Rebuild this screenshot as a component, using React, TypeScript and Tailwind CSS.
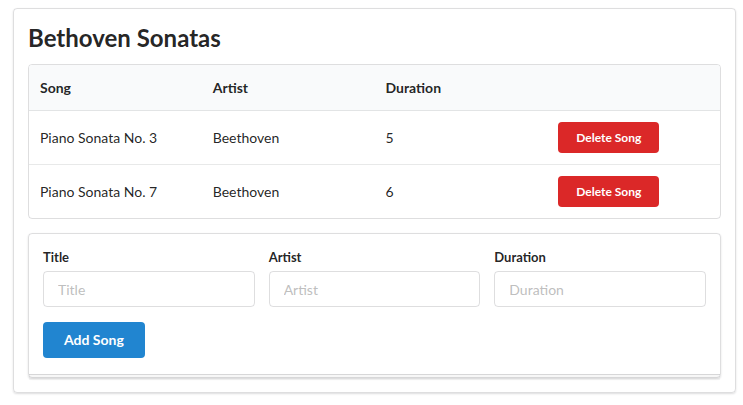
const songs = [
  { title: "Piano Sonata No. 3", artist: "Beethoven", duration: 5 },
  { title: "Piano Sonata No. 7", artist: "Beethoven", duration: 6 },
];

const fields = ["Title", "Artist", "Duration"];

export default function App() {
  return (
    <div className="min-h-screen bg-white pl-[13px] pr-[7px] pt-2 font-['Lato','Noto_Sans',sans-serif] text-[14px] text-[rgba(0,0,0,0.87)]">
      <div className="rounded-[4px] border border-[rgba(34,36,38,0.15)] p-[14px] shadow-[0_1px_2px_0_rgba(34,36,38,0.15)]">
        <h2 className="mb-[12px] text-[24px] font-bold leading-[29px]">Bethoven Sonatas</h2>

        {/* song list */}
        <div className="overflow-hidden rounded-[4px] border border-[rgba(34,36,38,0.15)]">
          <table className="w-full table-fixed border-collapse text-left">
            <thead>
              <tr className="bg-[#f9fafb]">
                <th className="px-[11px] py-[13px] font-bold leading-[19px]">Song</th>
                <th className="px-[11px] py-[13px] font-bold leading-[19px]">Artist</th>
                <th className="px-[11px] py-[13px] font-bold leading-[19px]">Duration</th>
                <th className="px-[11px] py-[13px]" />
              </tr>
            </thead>
            <tbody>
              {songs.map((song) => (
                <tr key={song.title} className="border-t border-[rgba(34,36,38,0.1)]">
                  <td className="px-[11px] py-[11px]">{song.title}</td>
                  <td className="px-[11px] py-[11px]">{song.artist}</td>
                  <td className="px-[11px] py-[11px]">{song.duration}</td>
                  <td className="px-[11px] py-[11px]">
                    <button
                      type="button"
                      className="h-[31px] rounded-[4px] bg-[#db2828] px-[18px] text-[12px] font-bold leading-[12px] text-white"
                    >
                      Delete Song
                    </button>
                  </td>
                </tr>
              ))}
            </tbody>
          </table>
        </div>

        {/* add form, stacked segment */}
        <div className="relative mt-[14px] rounded-[4px] border border-[rgba(34,36,38,0.15)] px-[14px] pb-[19px] pt-[14px] shadow-[0_1px_2px_0_rgba(34,36,38,0.15)] after:absolute after:-bottom-[3px] after:left-0 after:h-[6px] after:w-full after:border-t after:border-[rgba(34,36,38,0.15)] after:bg-[rgba(0,0,0,0.03)] after:content-['']">
          <div className="grid grid-cols-3 gap-[14px]">
            {fields.map((field) => (
              <div key={field}>
                <label className="mb-[4px] block text-[13px] font-bold leading-[19px]">{field}</label>
                <input
                  placeholder={field}
                  className="h-[36px] w-full rounded-[4px] border border-[rgba(34,36,38,0.15)] px-[14px] text-[14px] outline-none placeholder:text-[rgba(180,180,180,0.87)]"
                />
              </div>
            ))}
          </div>
          <button
            type="button"
            className="mt-[15px] h-[36px] rounded-[4px] bg-[#2185d0] px-[21px] text-[14px] font-bold leading-[14px] text-white"
          >
            Add Song
          </button>
        </div>
      </div>
    </div>
  );
}
